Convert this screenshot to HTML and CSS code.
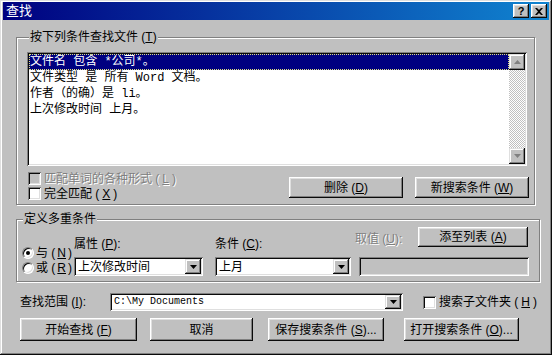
FILE: index.html
```html
<!DOCTYPE html>
<html lang="zh-CN">
<head>
    <meta charset="UTF-8">
    <title>查找</title>
    <link rel="stylesheet" href="styles.css">
</head>
<body>
    <div class="window">
        <div class="titlebar">
            <span class="title">查找</span>
            <div class="title-buttons">
                <span class="tbtn tbtn-help">?</span>
                <span class="tbtn">
                    <svg width="8" height="7" viewBox="0 0 8 7"><path d="M0 0h2l2 2 2-2h2L5 3.5 8 7H6L4 5 2 7H0l3-3.5z" fill="#000"/></svg>
                </span>
            </div>
        </div>

        <div class="dialog">
            <fieldset class="group group-criteria">
                <legend>按下列条件查找文件 (<u>T</u>)</legend>
                <div class="listbox">
                    <ul class="list-items">
                        <li class="selected">文件名 包含 *公司*。</li>
                        <li>文件类型 是 所有 Word 文档。</li>
                        <li>作者（的确）是 li。</li>
                        <li>上次修改时间 上月。</li>
                    </ul>
                    <div class="scrollbar">
                        <span class="sb-btn">
                            <svg width="7" height="4" viewBox="0 0 7 4"><path d="M3.5 0 7 4H0z" fill="#808080"/></svg>
                        </span>
                        <span class="sb-track"></span>
                        <span class="sb-btn">
                            <svg width="7" height="4" viewBox="0 0 7 4"><path d="M0 0h7L3.5 4z" fill="#808080"/></svg>
                        </span>
                    </div>
                </div>
                <div class="criteria-bottom">
                    <div class="checks">
                        <label class="check disabled"><span class="box"></span>匹配单词的各种形式 (<u>L</u>)</label>
                        <label class="check"><span class="box"></span>完全匹配 (<u>X</u>)</label>
                    </div>
                    <div class="btn-pair">
                        <button class="btn btn-mid">删除 (<u>D</u>)</button>
                        <button class="btn btn-mid">新搜索条件 (<u>W</u>)</button>
                    </div>
                </div>
            </fieldset>

            <fieldset class="group group-define">
                <legend>定义多重条件</legend>
                <div class="define-row">
                    <div class="radios">
                        <label class="radio"><span class="dot checked"></span>与 (<u>N</u>)</label>
                        <label class="radio"><span class="dot"></span>或 (<u>R</u>)</label>
                    </div>
                    <div class="field field-prop">
                        <span class="field-label">属性 (<u>P</u>):</span>
                        <div class="combo">
                            <span class="combo-text">上次修改时间</span>
                            <span class="combo-btn"><svg width="7" height="4" viewBox="0 0 7 4"><path d="M0 0h7L3.5 4z" fill="#000"/></svg></span>
                        </div>
                    </div>
                    <div class="field field-cond">
                        <span class="field-label">条件 (<u>C</u>):</span>
                        <div class="combo">
                            <span class="combo-text">上月</span>
                            <span class="combo-btn"><svg width="7" height="4" viewBox="0 0 7 4"><path d="M0 0h7L3.5 4z" fill="#000"/></svg></span>
                        </div>
                    </div>
                    <div class="field field-value">
                        <div class="value-head">
                            <span class="field-label disabled-text">取值 (<u>U</u>):</span>
                            <button class="btn btn-add">添至列表 (<u>A</u>)</button>
                        </div>
                        <div class="textbox disabled-box"></div>
                    </div>
                </div>
            </fieldset>

            <div class="lookin-row">
                <span class="lookin-label">查找范围 (<u>I</u>):</span>
                <div class="combo combo-path">
                    <span class="combo-text mono">C:\My Documents</span>
                    <span class="combo-btn"><svg width="7" height="4" viewBox="0 0 7 4"><path d="M0 0h7L3.5 4z" fill="#000"/></svg></span>
                </div>
                <label class="check check-sub"><span class="box"></span>搜索子文件夹 (<u>H</u>)</label>
            </div>

            <div class="action-row">
                <button class="btn btn-find">开始查找 (<u>F</u>)</button>
                <button class="btn btn-cancel">取消</button>
                <button class="btn btn-save">保存搜索条件 (<u>S</u>)...</button>
                <button class="btn btn-open">打开搜索条件 (<u>O</u>)...</button>
            </div>
        </div>
    </div>
</body>
</html>
```

FILE: styles.css
```css
/* 仿 Windows 98 对话框 */
* {
    box-sizing: border-box;
}

body {
    margin: 0;
    background: #c0c0c0;
    font-family: "Liberation Sans", "Noto Sans CJK SC", sans-serif;
    font-size: 12px;
    line-height: 14px;
    color: #000;
}

.window {
    width: 552px;
    height: 355px;
    padding: 2px 3px 3px;
    background: #c0c0c0;
    box-shadow: inset -1px -1px #0a0a0a, inset 1px 1px #dfdfdf,
                inset -2px -2px #808080, inset 2px 2px #fff;
}

.titlebar {
    height: 18px;
    display: flex;
    align-items: center;
    justify-content: space-between;
    padding: 0 2px 0 2px;
    background: linear-gradient(90deg, #000080, #1084d0);
    color: #fff;
}

.title {
    padding-left: 1px;
    font-size: 13px;
}

.title-buttons {
    display: flex;
    gap: 2px;
}

.tbtn {
    width: 16px;
    height: 14px;
    display: flex;
    align-items: center;
    justify-content: center;
    background: #c0c0c0;
    color: #000;
    font-weight: bold;
    font-size: 11px;
    box-shadow: inset -1px -1px #0a0a0a, inset 1px 1px #fff,
                inset -2px -2px #808080, inset 2px 2px #dfdfdf;
}

.dialog {
    display: flex;
    flex-direction: column;
}

/* 分组框 */
.group {
    margin: 0;
    padding: 0;
    border: 1px solid #808080;
    box-shadow: inset 1px 1px #fff, 1px 1px #fff;
}

.group legend {
    margin-left: 2px;
    padding: 0 1px;
    background: #c0c0c0;
    line-height: 14px;
}

u {
    text-decoration: underline;
}

.group-criteria {
    margin: 10px 14px 0 13px;
    padding: 8px 5px 3px 10px;
}

.listbox {
    width: 500px;
    height: 114px;
    display: flex;
    padding: 2px;
    background: #fff;
    box-shadow: inset 1px 1px #808080, inset -1px -1px #fff,
                inset 2px 2px #0a0a0a, inset -2px -2px #dfdfdf;
}

.list-items {
    flex: 1;
    margin: 0;
    padding: 0;
    list-style: none;
    font-family: "Liberation Mono", "Noto Sans CJK SC", monospace;
}

.list-items li {
    height: 16px;
    line-height: 16px;
    padding-left: 1px;
    white-space: pre;
}

.list-items .selected {
    background: #000080;
    color: #fff;
    outline: 1px dotted #e0e080;
    outline-offset: -1px;
}

.scrollbar {
    width: 16px;
    display: flex;
    flex-direction: column;
}

.sb-btn {
    height: 16px;
    display: flex;
    align-items: center;
    justify-content: center;
    background: #c0c0c0;
    box-shadow: inset -1px -1px #0a0a0a, inset 1px 1px #dfdfdf,
                inset -2px -2px #808080, inset 2px 2px #fff;
}

.sb-track {
    flex: 1;
    background: repeating-conic-gradient(#c0c0c0 0 25%, #fff 0 50%) 0 0 / 2px 2px;
}

.criteria-bottom {
    display: flex;
    margin-top: 5px;
}

.checks {
    display: flex;
    flex-direction: column;
    padding-left: 1px;
}

.check {
    display: flex;
    align-items: center;
    gap: 3px;
    height: 15px;
    white-space: nowrap;
}

.box {
    width: 13px;
    height: 13px;
    background: #fff;
    box-shadow: inset 1px 1px #808080, inset -1px -1px #fff,
                inset 2px 2px #0a0a0a, inset -2px -2px #dfdfdf;
}

.disabled .box {
    background: #c0c0c0;
}

.disabled,
.disabled-text {
    color: #808080;
    text-shadow: 1px 1px #fff;
}

.btn-pair {
    display: flex;
    gap: 12px;
    margin: 6px 0 0 auto;
}

/* 按钮 */
.btn {
    height: 21px;
    padding: 0;
    border: none;
    background: #c0c0c0;
    font: inherit;
    color: #000;
    box-shadow: inset -1px -1px #0a0a0a, inset 1px 1px #fff,
                inset -2px -2px #808080, inset 2px 2px #dfdfdf;
}

.btn-mid {
    width: 114px;
}

.group-define {
    margin: 7px 9px 0 13px;
    padding: 1px 4px 5px 4px;
}

.define-row {
    display: flex;
    align-items: flex-end;
}

.radios {
    width: 53px;
    display: flex;
    flex-direction: column;
    padding-left: 1px;
    margin-bottom: 1px;
}

.radio {
    display: flex;
    align-items: center;
    gap: 2px;
    height: 15px;
    white-space: nowrap;
}

.dot {
    width: 12px;
    height: 12px;
    border-radius: 50%;
    background: #fff;
    border: 1px solid;
    border-color: #808080 #fff #fff #808080;
    box-shadow: inset 1px 1px #0a0a0a, inset -1px -1px #dfdfdf;
    display: flex;
    align-items: center;
    justify-content: center;
}

.dot.checked::after {
    content: "";
    width: 4px;
    height: 4px;
    border-radius: 50%;
    background: #000;
}

.field {
    display: flex;
    flex-direction: column;
}

.field-label {
    line-height: 14px;
    margin-bottom: 6px;
    white-space: nowrap;
}

.field-prop {
    width: 129px;
}

.field-cond {
    width: 136px;
    margin-left: 12px;
}

.field-value {
    width: 174px;
    margin-left: 4px;
}

.value-head {
    display: flex;
    align-items: center;
    justify-content: space-between;
    margin-bottom: 10px;
}

.value-head .field-label {
    margin-bottom: 0;
    margin-top: 3px;
}

.btn-add {
    width: 110px;
    height: 20px;
    margin-right: 1px;
}

/* 组合框 / 文本框 */
.combo,
.textbox {
    height: 19px;
    display: flex;
    align-items: center;
    padding: 2px;
    background: #fff;
    box-shadow: inset 1px 1px #808080, inset -1px -1px #fff,
                inset 2px 2px #0a0a0a, inset -2px -2px #dfdfdf;
}

.combo-text {
    flex: 1;
    padding-left: 2px;
    white-space: nowrap;
}

.combo-btn {
    width: 16px;
    height: 15px;
    display: flex;
    align-items: center;
    justify-content: center;
    background: #c0c0c0;
    box-shadow: inset -1px -1px #0a0a0a, inset 1px 1px #dfdfdf,
                inset -2px -2px #808080, inset 2px 2px #fff;
}

.textbox {
    margin-left: 4px;
}

.disabled-box {
    background: #c0c0c0;
}

.mono {
    font-family: "Liberation Mono", monospace;
    font-size: 10px;
}

.lookin-row {
    display: flex;
    align-items: center;
    margin: 11px 0 0 17px;
}

.lookin-label {
    width: 90px;
}

.combo-path {
    width: 293px;
    height: 18px;
}

.combo-path .combo-btn {
    height: 14px;
}

.check-sub {
    margin-left: 20px;
}

.action-row {
    display: flex;
    margin: 7px 0 0 17px;
}

.action-row .btn {
    height: 23px;
}

.btn-find {
    width: 117px;
}

.btn-cancel {
    width: 103px;
    margin-left: 13px;
}

.btn-save {
    width: 116px;
    margin-left: 15px;
}

.btn-open {
    width: 115px;
    margin-left: 20px;
}
```
